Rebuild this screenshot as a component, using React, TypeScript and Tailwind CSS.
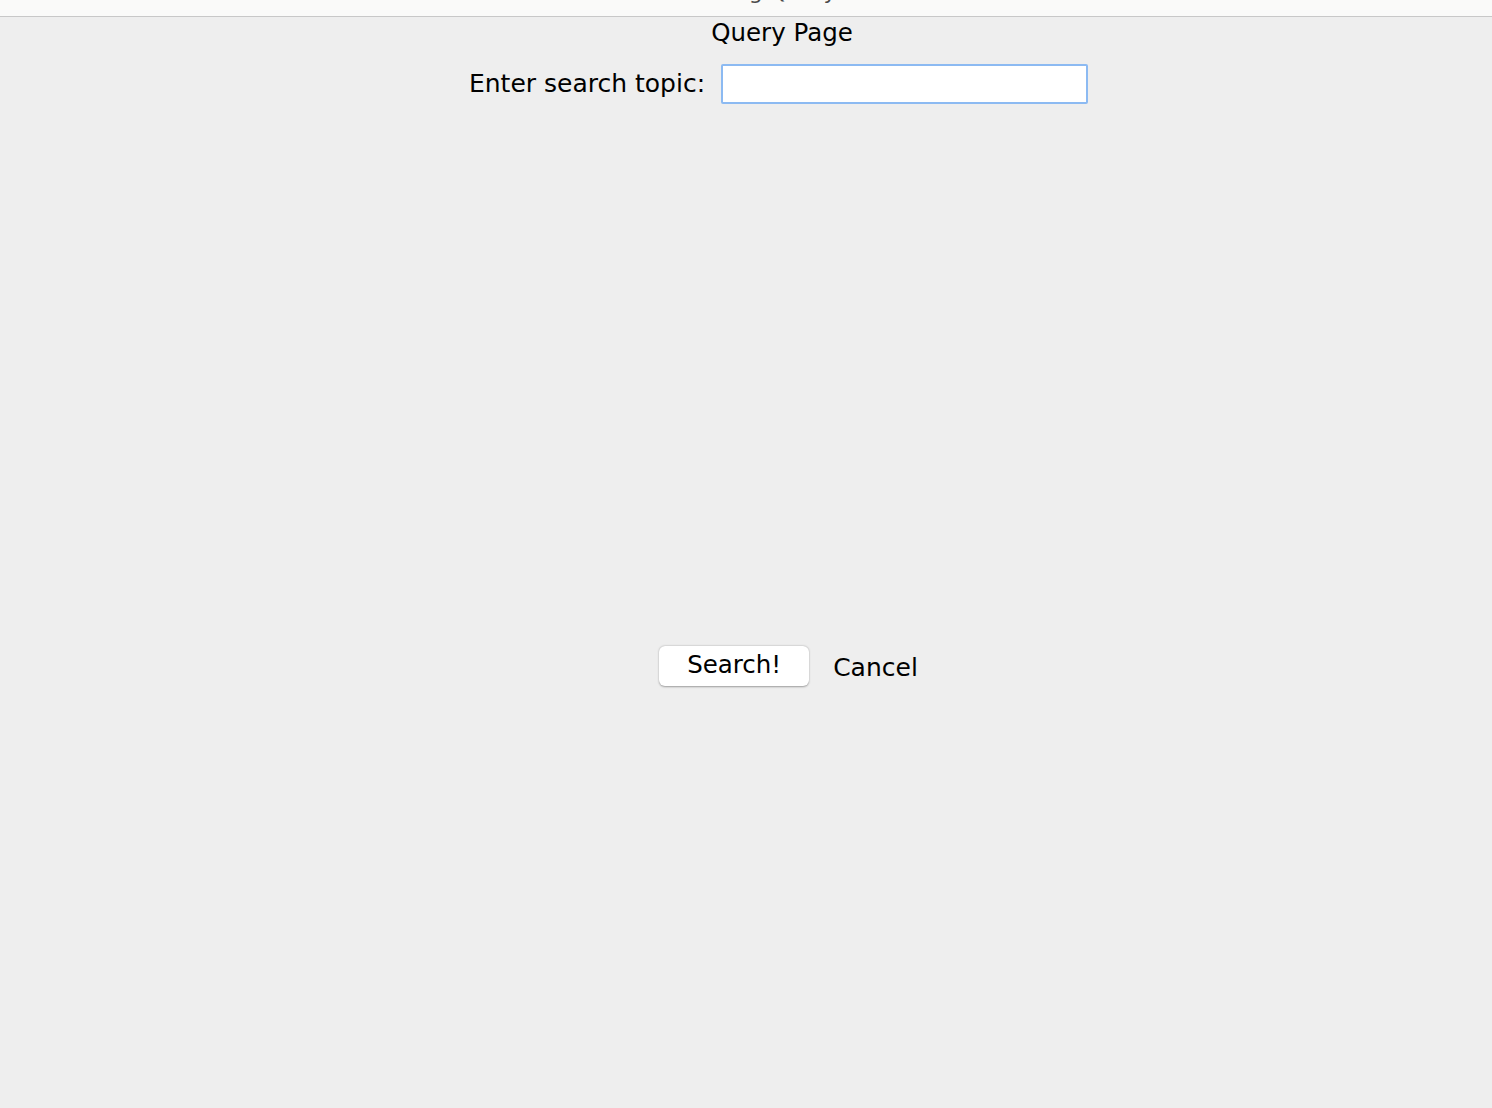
export default function App() {
  return (
    <div className="w-[1492px] h-[1108px] bg-[#eeeeee] flex flex-col overflow-hidden font-['DejaVu_Sans',sans-serif] text-black">
      <div className="h-[17px] shrink-0 bg-[#fafaf9] border-b border-[#c8c8c8] overflow-hidden flex justify-center pl-[72px]">
        <span className="text-[22px] leading-none -mt-[19px] text-[#4a4a4a]">Big Query</span>
      </div>

      <div className="flex flex-col pl-[72px]">
        <div className="flex justify-center">
          <h1 className="text-[24.5px] leading-[32px] font-normal">Query Page</h1>
        </div>

        <div className="flex justify-center items-center gap-[16px] mt-[15px] pr-[7px]">
          <label className="text-[25px] leading-[32px]">Enter search topic:</label>
          <input
            type="text"
            className="w-[367px] h-[40px] bg-white border-2 border-[#8cbaf2] rounded-[2px] outline-none px-2 text-[20px]"
          />
        </div>

        <div className="flex justify-center items-center gap-[24px] mt-[542px] pl-[13px]">
          <button className="w-[150px] h-[40px] bg-white rounded-[6px] shadow-[0_0.5px_2px_rgba(0,0,0,0.35)] text-[24.5px] leading-none pb-[2px]">
            Search!
          </button>
          <button className="text-[25px] leading-none pt-[2px]">Cancel</button>
        </div>
      </div>
    </div>
  );
}
